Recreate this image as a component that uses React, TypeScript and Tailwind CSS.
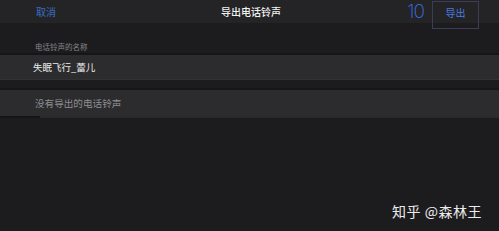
export default function App() {
  return (
    <div className="relative h-[231px] w-[499px] overflow-hidden bg-[#1c1c1e] font-['Noto_Sans_CJK_SC','Noto_Sans',sans-serif]">
      <header className="grid h-[23px] grid-cols-[1fr_auto_1fr] items-center bg-[#242426]">
        <div className="pl-[36px] text-[10px] leading-none text-[#3a6cc4]">取消</div>
        <div className="pl-[3px] text-[10px] font-medium leading-none text-[#f2f2f2]">导出电话铃声</div>
        <div className="flex h-[23px] items-start justify-end pr-[20px]">
          <span className="mr-[8px] mt-[2px] font-['Inter',sans-serif] text-[19px] font-extralight leading-[20px] tracking-[-1px] text-[#3a72e6]">
            10
          </span>
          <button className="mt-px flex h-[28px] w-[47px] justify-center border border-[#3a3c58] pt-[6px] text-[10px] leading-none text-[#4a7be0]">
            导出
          </button>
        </div>
      </header>

      <div className="pl-[35px] pt-[19px] text-[7.5px] leading-[10px] text-[#86868b]">电话铃声的名称</div>

      <div className="mt-[1px] border-t-[2px] border-[#161618]">
        <div className="flex h-[25px] items-center border-b border-[#323234] bg-[#2c2c2e] pl-[33px] text-[9.5px] text-[#ededed]">
          失眠飞行_蕾儿
        </div>
      </div>

      <div className="mt-[8px] border-t-[2px] border-[#161618]">
        <div className="flex h-[26px] items-center bg-[#2c2c2e] pl-[35px] text-[9.6px] text-[#8e8e93]">
          没有导出的电话铃声
        </div>
        <div className="flex h-[2px]">
          <div className="w-[40px] bg-[#151517]" />
          <div className="flex-1 bg-[#2a2a2c]" />
        </div>
      </div>

      <div className="absolute left-[392px] top-[201px] text-[14px] leading-[20px] tracking-[0.5px] text-[#ececec]">
        知乎 @森林王
      </div>
    </div>
  );
}
